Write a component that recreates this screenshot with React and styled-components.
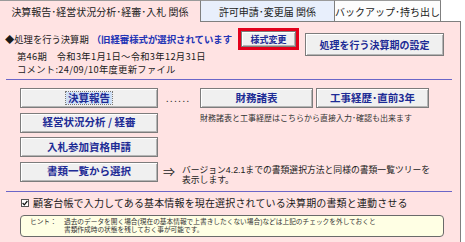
import React from "react";
import styled, { createGlobalStyle } from "styled-components";

const NAVY = "#1d2b95";
const PINK = "#ffe3e3";
const LINE = "#7f7f7f";
const RULE = "#6b66c8";

const GlobalStyle = createGlobalStyle`
  html, body { margin: 0; padding: 0; background: #fff; }
  body {
    font-family: "Noto Sans CJK JP", "Noto Sans", sans-serif;
    color: #1a1a1a;
  }
`;

const Screen = styled.div`
  width: 465px;
  height: 242px;
  overflow: hidden;
  background: #fff;
`;

const TabBar = styled.div`
  display: flex;
  height: 22px;
`;

const Tab = styled.div`
  box-sizing: border-box;
  width: ${({ $w }) => $w}px;
  height: 22px;
  display: flex;
  align-items: center;
  justify-content: center;
  padding-top: 1px;
  font-size: 10px;
  line-height: 1;
  white-space: nowrap;
  color: #222;
  background: ${({ $bg }) => $bg};
  border-top: 1px solid #9a9a9a;
  border-right: 1px solid ${LINE};
  border-bottom: ${({ $active }) => ($active ? "none" : `1px solid ${LINE}`)};
`;

const TabFiller = styled.div`
  box-sizing: border-box;
  width: 20px;
  height: 22px;
  border-bottom: 1px solid ${LINE};
`;

const Panel = styled.div`
  box-sizing: border-box;
  width: 461px;
  height: 220px;
  background: ${PINK};
  border-right: 1px solid ${LINE};
  padding: 6px 4px 0 5px;
`;

const Header = styled.div`
  display: grid;
  grid-template-columns: 300px 139px;
  align-items: start;
`;

const HeaderInfo = styled.div`
  display: flex;
  flex-direction: column;
`;

const PeriodLine = styled.div`
  display: flex;
  align-items: center;
  height: 22px;
  font-size: 9.3px;
  white-space: nowrap;
`;

const Notice = styled.span`
  margin-left: 3px;
  color: #2233b5;
  font-weight: bold;
  font-size: 9.4px;
`;

const RedFrame = styled.div`
  display: flex;
  margin-left: auto;
  margin-right: 6px;
  border: 3px solid #e3001b;
`;

const InfoLine = styled.div`
  padding-left: 12px;
  font-size: 9.3px;
  line-height: 13px;
  letter-spacing: 0.3px;
  white-space: nowrap;
`;

const Button = styled.button`
  box-sizing: border-box;
  width: ${({ $w }) => $w}px;
  height: ${({ $h }) => $h}px;
  margin: ${({ $m }) => $m || 0};
  padding: 0;
  display: flex;
  align-items: center;
  justify-content: center;
  background: #f0f0f0;
  border: 1px solid #7c7c7c;
  box-shadow: inset 1px 1px 0 #fff, inset -1px -1px 0 #b5b5b5;
  font-family: inherit;
  font-weight: bold;
  font-size: ${({ $fs }) => $fs || 10.5}px;
  line-height: 1;
  color: ${NAVY};
  white-space: nowrap;
`;

const FocusLabel = styled.span`
  padding: 1px 2px;
  background: #cfe0f6;
  outline: 1px dotted #777;
`;

const Rule = styled.div`
  height: 1px;
  background: ${RULE};
  margin: ${({ $top }) => $top}px 4px 0 1px;
`;

const MainGrid = styled.div`
  display: grid;
  grid-template-columns: 138px 1fr;
  grid-template-rows: repeat(4, 20px);
  column-gap: 5px;
  row-gap: 4.5px;
  margin-top: 8px;
  padding-left: 15px;
`;

const SideRow = styled.div`
  display: flex;
  align-items: ${({ $top }) => ($top ? "flex-start" : "center")};
`;

const Dots = styled.span`
  width: 37px;
  padding-left: 3px;
  box-sizing: border-box;
  font-size: 9px;
  letter-spacing: 1.6px;
  color: #333;
`;

const Note = styled.div`
  padding-left: 37px;
  font-size: 8px;
  line-height: 10px;
  color: #333;
  white-space: nowrap;
`;

const Arrow = styled.span`
  width: 19px;
  font-size: 12px;
  line-height: 12px;
  margin-top: 4px;
  color: #222;
`;

const ArrowText = styled.div`
  margin-top: 3.5px;
  color: #222;
`;

/* tight two-line notes: a compact primary font keeps the line boxes apart,
   the Japanese glyphs still come from Noto Sans CJK JP */
const TextLine = styled.div`
  height: ${({ $lh }) => $lh}px;
  font-family: "Liberation Sans", "Noto Sans CJK JP", sans-serif;
  font-size: ${({ $fs }) => $fs}px;
  line-height: ${({ $lh }) => $lh}px;
  white-space: nowrap;
`;

const CheckRow = styled.label`
  display: flex;
  align-items: center;
  height: 14px;
  margin-top: 4px;
  padding-left: 16px;
  font-size: 10px;
  letter-spacing: 0.15px;
  white-space: nowrap;
`;

const CheckBox = styled.span`
  box-sizing: border-box;
  width: 8px;
  height: 8px;
  margin-right: 4px;
  display: flex;
  align-items: center;
  justify-content: center;
  border: 1px solid #555;
  background: #fff;
`;

const HintBox = styled.div`
  box-sizing: border-box;
  width: 424px;
  height: 22px;
  margin: 5px 0 0 15px;
  padding: 2px 0 0 9px;
  display: grid;
  grid-template-columns: 34px 1fr;
  align-items: start;
  background: #ffffe4;
  border: 1px solid #6a6a6a;
  border-radius: 4px;
  color: #333;
`;

export default function App() {
  return (
    <Screen>
      <GlobalStyle />
      <TabBar>
        <Tab $w={201} $bg={PINK} $active>決算報告･経営状況分析･経審･入札 関係</Tab>
        <Tab $w={134} $bg="#e8effc">許可申請･変更届 関係</Tab>
        <Tab $w={106} $bg="#fdfdfd">バックアップ･持ち出し</Tab>
        <TabFiller />
      </TabBar>

      <Panel>
        <Header>
          <HeaderInfo>
            <PeriodLine>
              <span>◆処理を行う決算期</span>
              <Notice>（旧経審様式が選択されています</Notice>
              <RedFrame>
                <Button $w={55} $h={16} $fs={9}>様式変更</Button>
              </RedFrame>
            </PeriodLine>
            <InfoLine>第46期　令和3年1月1日～令和3年12月31日</InfoLine>
            <InfoLine>コメント:24/09/10年度更新ファイル</InfoLine>
          </HeaderInfo>
          <Button $w={139} $h={23} $fs={10} $m="5px 0 0 0">処理を行う決算期の設定</Button>
        </Header>

        <Rule $top={3} />

        <MainGrid>
          <Button $w={138} $h={20}><FocusLabel>決算報告</FocusLabel></Button>
          <SideRow>
            <Dots>......</Dots>
            <Button $w={113} $h={20}>財務諸表</Button>
            <Button $w={113} $h={20} $m="0 0 0 3px">工事経歴･直前3年</Button>
          </SideRow>

          <Button $w={138} $h={20}>経営状況分析 / 経審</Button>
          <SideRow $top>
            <Note>財務諸表と工事経歴はこちらから直接入力･確認も出来ます</Note>
          </SideRow>

          <Button $w={138} $h={20}>入札参加資格申請</Button>
          <SideRow />

          <Button $w={138} $h={20}>書類一覧から選択</Button>
          <SideRow $top>
            <Arrow>⇒</Arrow>
            <ArrowText>
              <TextLine $fs={8.8} $lh={10.2}>バージョン4.2.1までの書類選択方法と同様の書類一覧ツリーを</TextLine>
              <TextLine $fs={8.8} $lh={10.2}>表示します。</TextLine>
            </ArrowText>
          </SideRow>
        </MainGrid>

        <Rule $top={9.3} />

        <CheckRow>
          <CheckBox>
            <svg width="6" height="6" viewBox="0 0 6 6">
              <path d="M0.6 3 L2.3 4.8 L5.4 1" fill="none" stroke="#111" strokeWidth="1.2" />
            </svg>
          </CheckBox>
          顧客台帳で入力してある基本情報を現在選択されている決算期の書類と連動させる
        </CheckRow>

        <HintBox>
          <TextLine $fs={6.7} $lh={8}>ヒント：</TextLine>
          <div>
            <TextLine $fs={6.7} $lh={8}>過去のデータを開く場合(現在の基本情報で上書きしたくない場合)などは上記のチェックを外しておくと</TextLine>
            <TextLine $fs={6.7} $lh={8}>書類作成時の状態を残しておく事が可能です。</TextLine>
          </div>
        </HintBox>
      </Panel>
    </Screen>
  );
}
